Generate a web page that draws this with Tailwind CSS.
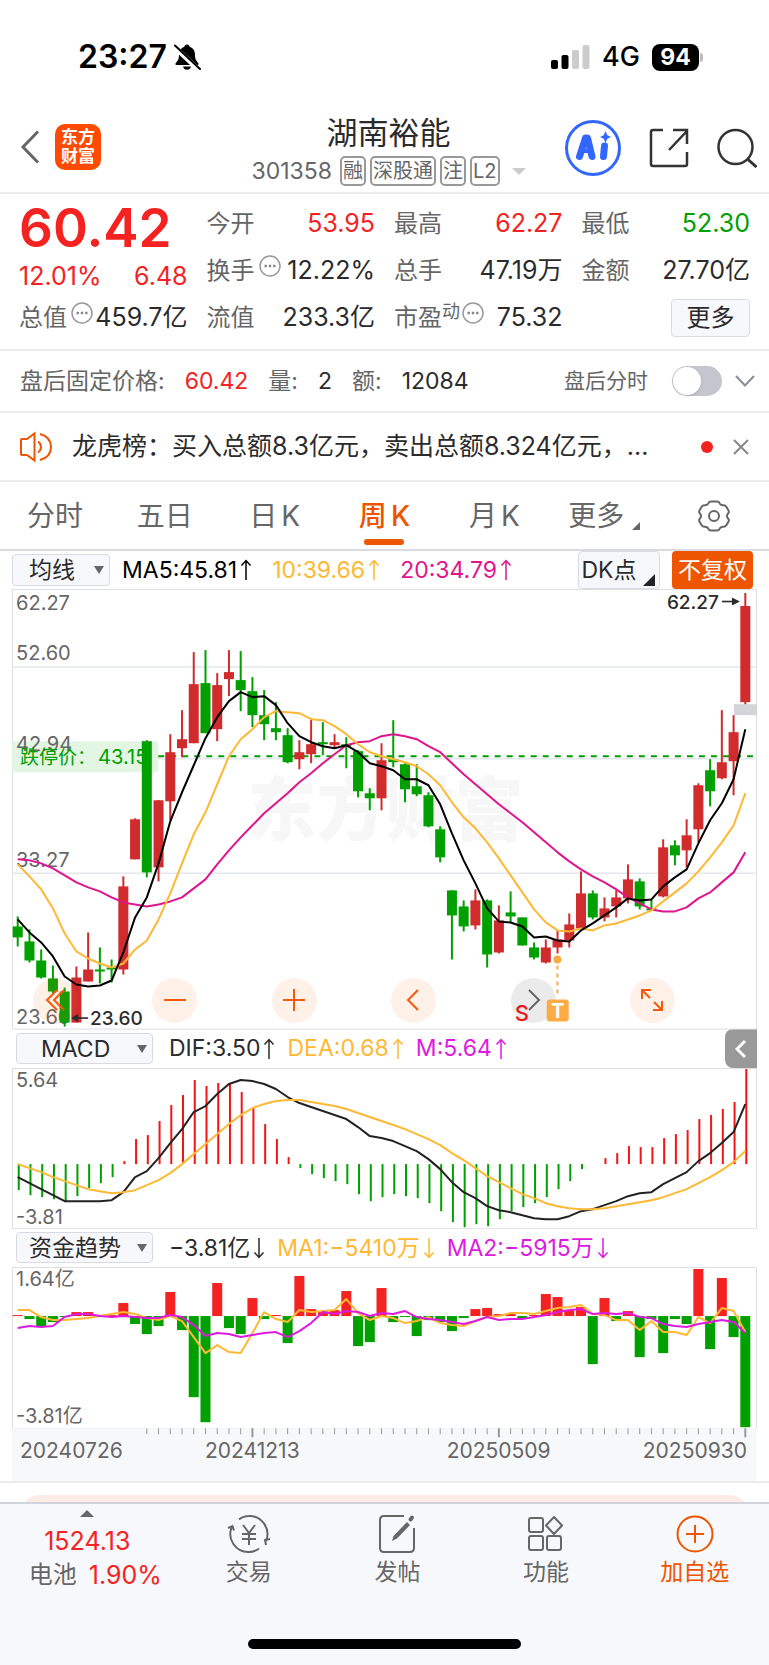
<!DOCTYPE html>
<html lang="zh-CN">

<head>
  <meta charset="UTF-8">
  <meta name="viewport" content="width=device-width, initial-scale=1.0">
  <title>湖南裕能 301358</title>
  <script src="https://cdn.jsdelivr.net/npm/@tailwindcss/browser@4"></script>
</head>

<body class="bg-white text-[#2b2b2b] font-['Inter','Noto_Sans_CJK_SC',sans-serif]">

  <!-- Shared icons -->
  <svg class="hidden">
    <symbol id="arrow-up" viewBox="0 0 12 22">
      <path d="M6 21V1.500M1.500 6.500L6 1.500l4.500 5" fill="none" stroke="currentColor" stroke-width="1.500" />
    </symbol>
    <symbol id="arrow-down" viewBox="0 0 12 22">
      <path d="M6 1v19.500M1.500 15.500L6 20.500l4.500-5" fill="none" stroke="currentColor" stroke-width="1.500" />
    </symbol>
    <symbol id="more-dots" viewBox="0 0 22 22">
      <circle cx="11" cy="11" r="10" fill="none" stroke="#999" stroke-width="1.500" />
      <path d="M5.500 11h2.400M9.800 11h2.400M14.100 11h2.400" stroke="#888" stroke-width="2.400" />
    </symbol>
    <symbol id="caret" viewBox="0 0 10 8">
      <path d="M0 0h10L5 8z" fill="currentColor" />
    </symbol>
  </svg>

  <!-- Status bar -->
  <div class="flex h-[104px] items-center justify-between pt-[10px] pr-[66px] pl-[78px] text-black">
    <div class="flex items-center gap-[6px]">
      <span class="text-[32px] font-semibold">23:27</span>
      <svg class="h-7 w-7" viewBox="0 0 28 28">
        <path d="M14 1.500c1.500 0 2.500 1 2.700 2.300 3.600 1.200 5.300 4 5.300 8 0 4.400 1.200 6 3.200 8.200.8 1 .4 2-1 2H3.800c-1.400 0-1.800-1-1-2C4.800 17.800 6 16.200 6 11.800c0-4 1.700-6.800 5.300-8C11.500 2.500 12.500 1.500 14 1.500z" />
        <path d="M10 23.500h8c-.4 2-2 3.300-4 3.300s-3.600-1.300-4-3.300z" />
        <path d="M1 3.500L26 27" stroke="#fff" stroke-width="5" />
        <path d="M2 2.500L27 26" stroke="#000" stroke-width="2" stroke-linecap="round" />
      </svg>
    </div>
    <div class="flex items-center gap-3">
      <svg class="h-6 w-[39px]" viewBox="0 0 39 24">
        <rect x="0" y="15" width="7" height="9" rx="2" />
        <rect x="10.500" y="10" width="7" height="14" rx="2" />
        <rect x="21" y="5" width="7" height="19" rx="2" fill="#ccc" />
        <rect x="31.500" y="0" width="7" height="24" rx="2" fill="#ccc" />
      </svg>
      <span class="text-[27px] font-medium">4G</span>
      <span class="flex items-center gap-[1px]">
        <span class="flex h-[27px] w-[47px] items-center justify-center rounded-lg bg-black text-[23px] font-bold text-white">94</span>
        <span class="h-[9px] w-[3px] rounded-r-full bg-[#bbb]"></span>
      </span>
    </div>
  </div>

  <!-- Header -->
  <header class="grid h-[90px] grid-cols-[1fr_auto_1fr] items-start border-b-2 border-[#ededef] pr-3 pl-5">
    <div class="flex items-center gap-[15px] pt-5">
      <button aria-label="返回">
        <svg class="h-9 w-5" viewBox="0 0 20 36"><path d="M18 2.500L3 18l15 15.500" fill="none" stroke="#666" stroke-width="3" /></svg>
      </button>
      <a href="#" class="flex h-[46px] w-[46px] flex-col items-center justify-center rounded-[10px] bg-[#ff4a00] text-[17px] leading-[19px] font-bold text-white">
        <span>东方</span><span>财富</span>
      </a>
    </div>
    <div class="flex flex-col items-center pt-2">
      <h1 class="text-[31px] leading-[42px]">湖南裕能</h1>
      <div class="flex items-center gap-1 text-[#666]">
        <span class="mr-1 text-[23px]">301358</span>
        <span class="rounded-[5px] border-2 border-[#999] px-[1px] text-[20px] leading-[26px]">融</span>
        <span class="rounded-[5px] border-2 border-[#999] px-[1px] text-[20px] leading-[26px]">深股通</span>
        <span class="rounded-[5px] border-2 border-[#999] px-[1px] text-[20px] leading-[26px]">注</span>
        <span class="rounded-[5px] border-2 border-[#999] px-[1px] text-[20px] leading-[26px]">L2</span>
        <svg class="ml-2 h-[7px] w-[14px] text-[#ccc]" viewBox="0 0 10 8" preserveAspectRatio="none"><use href="#caret" /></svg>
      </div>
    </div>
    <div class="flex items-center justify-end gap-7 pt-4">
      <button aria-label="AI 助手">
        <svg class="h-14 w-14" viewBox="0 0 56 56">
          <circle cx="28" cy="28" r="26.500" fill="#fff" stroke="#3366ff" stroke-width="3" />
          <g fill="none" stroke="#3366ff" stroke-linecap="round" stroke-linejoin="round">
            <path d="M14.500 36.500L20.500 18h2l4.500 18.500" stroke-width="7" />
            <path d="M17 31h8" stroke-width="4" />
            <path d="M39.500 26l-1 10.500" stroke-width="7" />
          </g>
          <path d="M40.500 11l1.800 4.200 3.700 1.800-3.700 1.800-1.800 4.200-1.800-4.200-3.700-1.800 3.700-1.800z" fill="#3366ff" />
        </svg>
      </button>
      <button aria-label="分享">
        <svg class="h-10 w-10" viewBox="0 0 40 40" fill="none" stroke="#333" stroke-width="2.500">
          <path d="M14 2H4Q2 2 2 4v32q0 2 2 2h32q2 0 2-2V24M20 22L38 3M24 2h14v14" />
        </svg>
      </button>
      <button aria-label="搜索">
        <svg class="h-10 w-10" viewBox="0 0 40 40" fill="none" stroke="#333" stroke-width="2.500">
          <circle cx="18.500" cy="19" r="17" /><path d="M30.500 31l9 8" stroke-width="3" />
        </svg>
      </button>
    </div>
  </header>

  <!-- Quote -->
  <section class="grid grid-cols-4 gap-x-[19px] border-b-2 border-[#ededef] px-[19px] pt-[6px] pb-2 text-[25px]">
    <div class="flex flex-col text-[#f52222]">
      <div class="flex h-[55px] items-center text-[53px] leading-[50px] font-semibold">60.42</div>
      <div class="flex h-11 items-center justify-between"><span>12.01%</span><span>6.48</span></div>
      <div class="flex h-[38px] items-center justify-between text-[#2b2b2b]">
        <span class="flex items-start text-2xl text-[#666]">总值<svg class="ml-1 h-[22px] w-[22px]"><use href="#more-dots" /></svg></span>
        <span>459.7亿</span>
      </div>
    </div>
    <div class="flex flex-col">
      <div class="flex h-[47px] items-center justify-between"><span class="text-2xl text-[#666]">今开</span><span class="text-[#f52222]">53.95</span></div>
      <div class="flex h-[47px] items-center justify-between">
        <span class="flex items-start text-2xl text-[#666]">换手<svg class="ml-1 h-[22px] w-[22px]"><use href="#more-dots" /></svg></span>
        <span>12.22%</span>
      </div>
      <div class="flex h-[47px] items-center justify-between"><span class="text-2xl text-[#666]">流值</span><span>233.3亿</span></div>
    </div>
    <div class="flex flex-col">
      <div class="flex h-[47px] items-center justify-between"><span class="text-2xl text-[#666]">最高</span><span class="text-[#f52222]">62.27</span></div>
      <div class="flex h-[47px] items-center justify-between"><span class="text-2xl text-[#666]">总手</span><span>47.19万</span></div>
      <div class="flex h-[47px] items-center justify-between">
        <span class="flex items-start text-2xl text-[#666]">市盈<span class="text-lg leading-5">动</span><svg class="ml-[2px] h-[22px] w-[22px]"><use href="#more-dots" /></svg></span>
        <span>75.32</span>
      </div>
    </div>
    <div class="flex flex-col">
      <div class="flex h-[47px] items-center justify-between"><span class="text-2xl text-[#666]">最低</span><span class="text-[#00a000]">52.30</span></div>
      <div class="flex h-[47px] items-center justify-between"><span class="text-2xl text-[#666]">金额</span><span>27.70亿</span></div>
      <div class="flex h-[47px] items-center justify-end">
        <button class="h-[38px] w-[79px] rounded border border-[#d9dbe3] bg-[#f7f8fb] text-2xl leading-8">更多</button>
      </div>
    </div>
  </section>

  <!-- After-hours price -->
  <section class="flex h-[62px] items-center border-b-2 border-[#ededef] pr-[14px] pl-5 text-[23px] text-[#666]">
    <span>盘后固定价格:</span>
    <span class="ml-5 text-[#f52222]">60.42</span>
    <span class="ml-5">量:</span>
    <span class="ml-5 text-[#2b2b2b]">2</span>
    <span class="ml-5">额:</span>
    <span class="ml-5 text-[#2b2b2b]">12084</span>
    <label for="after-hours" class="ml-auto text-[21px]">盘后分时</label>
    <span class="relative ml-6 h-[30px] w-[50px]">
      <input id="after-hours" type="checkbox" class="peer absolute inset-0 h-full w-full appearance-none rounded-full bg-[#c3c6cc] checked:bg-[#ee5500]">
      <span class="pointer-events-none absolute top-[1px] left-[1px] h-7 w-7 rounded-full bg-white shadow peer-checked:left-[21px]"></span>
    </span>
    <button aria-label="展开" class="ml-[13px]">
      <svg class="h-3 w-5" viewBox="0 0 20 12"><path d="M1 1l9 9.500L19 1" fill="none" stroke="#8a8d96" stroke-width="2" /></svg>
    </button>
  </section>

  <!-- News -->
  <section class="flex h-[69px] items-center border-b-2 border-[#ededef] pr-5 pl-5">
    <svg class="h-8 w-8 shrink-0" viewBox="0 0 32 32" fill="none" stroke="#ee5500" stroke-width="2">
      <path d="M1 9q0-1 1-1h5l7.500-5.500v27L7 24H2q-1 0-1-1zM18 10.500q3 2 3 5.500t-3 5.500M20 3q11 3 11 13T20 29" />
    </svg>
    <a href="#" class="ml-5 min-w-0 flex-1 truncate text-[25px]">龙虎榜：买入总额8.3亿元，卖出总额8.324亿元，...</a>
    <span class="ml-5 h-3 w-3 shrink-0 rounded-full bg-[#f52222]"></span>
    <button aria-label="关闭" class="ml-5 shrink-0">
      <svg class="h-4 w-4" viewBox="0 0 16 16"><path d="M1 1l14 14M15 1L1 15" stroke="#888" stroke-width="2" /></svg>
    </button>
  </section>

  <!-- Period tabs -->
  <nav class="grid h-[69px] grid-cols-7 border-b-2 border-[#d9dae2] text-[28px] text-[#666]">
    <a href="#" class="flex items-center justify-center">分时</a>
    <a href="#" class="flex items-center justify-center">五日</a>
    <a href="#" class="flex items-center justify-center gap-1">日<span>K</span></a>
    <a href="#" class="relative flex items-center justify-center gap-1 font-medium text-[#ee5500]">周<span>K</span>
      <span class="absolute bottom-1 left-1/2 h-[6px] w-10 -translate-x-1/2 rounded-full bg-[#ee5500]"></span>
    </a>
    <a href="#" class="flex items-center justify-center gap-1">月<span>K</span></a>
    <a href="#" class="flex items-center justify-center gap-2">更多
      <svg class="mt-5 h-2 w-2" viewBox="0 0 8 8"><path d="M8 0v8H0z" fill="#666" /></svg>
    </a>
    <button aria-label="设置" class="flex items-center justify-center">
      <svg class="h-8 w-8" viewBox="0 0 32 32" fill="none" stroke="#666" stroke-width="2">
        <path d="M13 1.500h6q2 0 2.500 1.500 1 2.500 4 2.300 2 0 3 1.700l2 3.500q1 1.500-.5 3-2 2.500 0 5 1.500 1.500.5 3l-2 3.500q-1 1.700-3 1.700-3-.2-4 2.300-.5 1.500-2.500 1.500h-6q-2 0-2.500-1.500-1-2.500-4-2.300-2 0-3-1.700l-2-3.500q-1-1.500.5-3 2-2.500 0-5-1.500-1.500-.5-3l2-3.500q1-1.700 3-1.700 3 .2 4-2.300.5-1.500 2.500-1.500z" />
        <circle cx="16" cy="16" r="5" />
      </svg>
    </button>
  </nav>

  <main class="px-3">
    <!-- Moving averages -->
    <div class="flex h-[38px] items-center text-[23px]">
      <button class="flex h-8 w-[98px] shrink-0 items-center justify-between rounded border border-[#d9dbe3] bg-[#f7f8fb] pr-[5px] pl-4 leading-7">均线
        <svg class="h-2 w-[10px] text-[#666]"><use href="#caret" /></svg>
      </button>
      <span class="ml-3 flex items-center gap-[3px] text-black">MA5:45.81<svg class="h-[22px] w-3"><use href="#arrow-up" /></svg></span>
      <span class="ml-5 flex items-center gap-[3px] text-[#ffb833]">10:39.66<svg class="h-[22px] w-3"><use href="#arrow-up" /></svg></span>
      <span class="ml-5 flex items-center gap-[3px] text-[#e0148c]">20:34.79<svg class="h-[22px] w-3"><use href="#arrow-up" /></svg></span>
      <button class="relative ml-auto h-[38px] w-[82px] rounded border border-[#d9dbe3] bg-[#f7f8fb] pr-5 leading-8 whitespace-nowrap">DK点
        <svg class="absolute right-1 bottom-[2px] h-3 w-3" viewBox="0 0 8 8"><path d="M8 0v8H0z" fill="#222" /></svg>
      </button>
      <button class="mr-1 ml-3 h-[38px] w-[81px] rounded bg-[#ee5500] leading-8 text-white">不复权</button>
    </div>

    <!-- Weekly candles -->
    <div class="relative">
      <svg class="block h-auto w-full" viewBox="0 0 744 440" font-size="20">
        <rect x="0.500" y="0.500" width="743" height="439" fill="none" stroke="#dddfe3" />
        <path d="M0 78H744M0 169.500H744M0 284H744" stroke="#e4e8ee" stroke-width="1.500" />
        <text x="235" y="246" font-size="69" font-weight="900" fill="#f7f7f7">东方财富</text>
        <path d="M0 152H142q4 0 4 4V179q0 4-4 4H0z" fill="#e3f5e3" />
        <g fill="#666">
          <text x="4" y="21">62.27</text>
          <text x="4" y="71">52.60</text>
          <text x="4" y="162">42.94</text>
          <text x="4" y="278">33.27</text>
          <text x="4" y="434">23.60</text>
        </g>
        <text x="8" y="175" font-size="19" fill="#00a000">跌停价：<tspan x="86" font-size="20">43.15</tspan></text>
        <path d="M146 167H744" stroke="#00a000" stroke-width="2" stroke-dasharray="6 6" />
        <rect x="721" y="115" width="23" height="11" fill="#d3d5da" />
        <g id="candles"></g>
        <g id="candle-lines" fill="none" stroke-width="2" stroke-linejoin="round"></g>
        <text x="706" y="20" text-anchor="end" font-size="19" font-weight="500" fill="#2b2b2b">62.27</text>
        <path d="M709 12.500H722" stroke="#2b2b2b" stroke-width="1.600" />
        <path d="M719 8.500L727 12.500l-8 4z" fill="#2b2b2b" />
        <text x="78" y="435" font-size="19" font-weight="500" fill="#2b2b2b">23.60</text>
        <path d="M76 428.500H64" stroke="#2b2b2b" stroke-width="1.600" />
        <path d="M66 424.500L59 428.500l7 4z" fill="#2b2b2b" />
      </svg>
      <div class="absolute right-[82px] bottom-[7px] left-[21px] flex justify-between">
        <button aria-label="最早" class="flex h-[45px] w-[45px] items-center justify-center rounded-full bg-[#ff6a1f]/10">
          <svg class="h-6 w-6" viewBox="0 0 24 24" fill="none" stroke="#f55a0a" stroke-width="2"><path d="M13 2L3 12l10 10M20 2L10 12l10 10" /></svg>
        </button>
        <button aria-label="缩小" class="flex h-[45px] w-[45px] items-center justify-center rounded-full bg-[#ff6a1f]/10">
          <svg class="h-6 w-6" viewBox="0 0 24 24" stroke="#f55a0a" stroke-width="2"><path d="M1 12h22" /></svg>
        </button>
        <button aria-label="放大" class="flex h-[45px] w-[45px] items-center justify-center rounded-full bg-[#ff6a1f]/10">
          <svg class="h-6 w-6" viewBox="0 0 24 24" stroke="#f55a0a" stroke-width="2"><path d="M1 12h22M12 1v22" /></svg>
        </button>
        <button aria-label="向左" class="flex h-[45px] w-[45px] items-center justify-center rounded-full bg-[#ff6a1f]/10">
          <svg class="h-6 w-6" viewBox="0 0 24 24" fill="none" stroke="#f55a0a" stroke-width="2"><path d="M16 2L6 12l10 10" /></svg>
        </button>
        <button aria-label="向右" class="flex h-[45px] w-[45px] items-center justify-center rounded-full bg-black/8">
          <svg class="h-6 w-6" viewBox="0 0 24 24" fill="none" stroke="#666" stroke-width="2"><path d="M8 2l10 10L8 22" /></svg>
        </button>
        <button aria-label="全屏" class="flex h-[45px] w-[45px] items-center justify-center rounded-full bg-[#ff6a1f]/10">
          <svg class="h-6 w-6" viewBox="0 0 24 24" fill="none" stroke="#f55a0a" stroke-width="2"><path d="M11 2H2v9M2 2l8 8M22 13v9h-9M22 22l-8-8" /></svg>
        </button>
      </div>
      <!-- Trade markers -->
      <svg class="pointer-events-none absolute inset-0 h-full w-full" viewBox="0 0 744 440">
        <circle cx="544.700" cy="370" r="4" fill="#ffab45" />
        <path d="M544.700 376V407" stroke="#ffab45" stroke-width="2" stroke-dasharray="4 4" />
        <rect x="534" y="410" width="22" height="22" rx="3" fill="#ffab45" />
        <text x="545" y="428" text-anchor="middle" font-size="20" font-weight="700" fill="#fff">T</text>
        <text x="502" y="431" font-size="22" font-weight="500" fill="#e81c1c">S</text>
      </svg>
    </div>

    <!-- MACD -->
    <div class="flex h-[38px] items-center pl-1 text-[23px]">
      <button class="flex h-[31px] w-[137px] shrink-0 items-center justify-between rounded border border-[#d9dbe3] bg-[#f7f8fb] pr-[5px] pl-6 leading-7">MACD
        <svg class="h-2 w-[10px] text-[#666]"><use href="#caret" /></svg>
      </button>
      <span class="ml-4 flex items-center gap-[3px]">DIF:3.50<svg class="h-[22px] w-3"><use href="#arrow-up" /></svg></span>
      <span class="ml-3 flex items-center gap-[3px] text-[#ffb833]">DEA:0.68<svg class="h-[22px] w-3"><use href="#arrow-up" /></svg></span>
      <span class="ml-3 flex items-center gap-[3px] text-[#dd1be0]">M:5.64<svg class="h-[22px] w-3"><use href="#arrow-up" /></svg></span>
      <button aria-label="收起" class="ml-auto flex h-[39px] w-8 items-center justify-center rounded-l-lg bg-[#999]">
        <svg class="h-5 w-3" viewBox="0 0 12 20"><path d="M10 2L2 10l8 8" fill="none" stroke="#fff" stroke-width="3" /></svg>
      </button>
    </div>
    <svg class="block h-auto w-full" viewBox="0 0 744 161" font-size="20" fill="#666">
      <rect x="0.500" y="0.500" width="743" height="160" fill="none" stroke="#dddfe3" />
      <text x="4" y="19">5.64</text>
      <text x="4" y="156">-3.81</text>
      <g id="macd-bars" stroke-width="2"></g>
      <g id="macd-lines" fill="none" stroke-width="2" stroke-linejoin="round"></g>
    </svg>

    <!-- Capital flow -->
    <div class="flex h-[38px] items-center pl-1 text-[23px]">
      <button class="flex h-[31px] w-[137px] shrink-0 items-center justify-between rounded border border-[#d9dbe3] bg-[#f7f8fb] pr-[5px] pl-3 leading-7">资金趋势
        <svg class="h-2 w-[10px] text-[#666]"><use href="#caret" /></svg>
      </button>
      <span class="ml-4 flex items-center gap-[3px]">−3.81亿<svg class="h-[22px] w-3"><use href="#arrow-down" /></svg></span>
      <span class="ml-3 flex items-center gap-[3px] text-[#ffb833]">MA1:−5410万<svg class="h-[22px] w-3"><use href="#arrow-down" /></svg></span>
      <span class="ml-3 flex items-center gap-[3px] text-[#dd1be0]">MA2:−5915万<svg class="h-[22px] w-3"><use href="#arrow-down" /></svg></span>
    </div>
    <svg class="block h-auto w-full" viewBox="0 0 744 214" font-size="20" fill="#666">
      <rect x="0.500" y="0.500" width="743" height="161" fill="none" stroke="#dddfe3" />
      <rect x="0" y="161" width="744" height="53" fill="#f7f8fa" />
      <text x="4" y="19">1.64亿</text>
      <text x="4" y="156">-3.81亿</text>
      <g id="flow-bars"></g>
      <g id="flow-lines" fill="none" stroke-width="2" stroke-linejoin="round"></g>
      <g id="ticks" stroke="#999"></g>
      <g font-size="21">
        <text x="8" y="191">20240726</text>
        <text x="240" y="191" text-anchor="middle">20241213</text>
        <text x="486" y="191" text-anchor="middle">20250509</text>
        <text x="734" y="191" text-anchor="end">20250930</text>
      </g>
    </svg>
  </main>

  <div class="h-[21px] overflow-hidden border-t-2 border-[#ebebef] px-5 pt-3">
    <div class="h-10 rounded-t-[20px] bg-[#feece4]"></div>
  </div>

  <!-- Bottom bar -->
  <footer class="border-t-2 border-[#d0d2dc] bg-[#f7f8fb] text-[23px] text-[#666]">
    <nav class="grid h-[135px] grid-cols-[175fr_149fr_149fr_149fr_149fr]">
      <a href="#" class="flex flex-col items-center pt-[6px] pl-4 text-2xl">
        <svg class="mr-4 h-[7px] w-[14px] rotate-180" viewBox="0 0 10 8" preserveAspectRatio="none"><use href="#caret" /></svg>
        <span class="mt-2 mr-4 text-[25px] leading-[32px] text-[#f52222]">1524.13</span>
        <span class="flex gap-3 leading-[36px]">电池 <span class="text-[25px] text-[#f52222]">1.90%</span></span>
      </a>
      <a href="#" class="flex flex-col items-center pt-[10px]">
        <svg class="h-10 w-11" viewBox="0 0 44 40" fill="none" stroke="#666" stroke-width="2">
          <path d="M12 5.500Q16.500 2 22 2a18 18 0 0 1 17 25M39 31l-1-5 5-1M32 34.500Q27.500 38 22 38A18 18 0 0 1 5 12.500M1 14l4.500-2 1.500 4.500" />
          <path d="M16 11l6 8 6-8M15 20h14M15 25h14M22 19v12" />
        </svg>
        <span class="leading-9">交易</span>
      </a>
      <a href="#" class="flex flex-col items-center pt-[10px]">
        <svg class="h-10 w-10" viewBox="0 0 40 40" fill="none" stroke="#666" stroke-width="2">
          <path d="M27 2H7Q3 2 3 6v28q0 4 4 4h26q4 0 4-4V14" />
          <path d="M15 27l1.500-5L30 8l3 3-13 13.500z" fill="#666" stroke="none" />
          <path d="M33.500 5.500l1.500-2" stroke-width="4" stroke-linecap="round" />
        </svg>
        <span class="leading-9">发帖</span>
      </a>
      <a href="#" class="flex flex-col items-center pt-[10px]">
        <svg class="h-10 w-10" viewBox="0 0 40 40" fill="none" stroke="#666" stroke-width="2" stroke-linejoin="round">
          <rect x="3" y="4" width="14" height="14" rx="2" />
          <rect x="3" y="22" width="14" height="14" rx="2" />
          <rect x="21" y="22" width="14" height="14" rx="2" />
          <path d="M28 3l8 8.500-8 8.500-8-8.500z" />
        </svg>
        <span class="leading-9">功能</span>
      </a>
      <a href="#" class="flex flex-col items-center pt-[10px] text-[#ee5500]">
        <svg class="h-10 w-10" viewBox="0 0 40 40" fill="none" stroke="#ee5500" stroke-width="2">
          <circle cx="20" cy="20" r="17.500" /><path d="M20 11v18M11 20h18" />
        </svg>
        <span class="leading-9">加自选</span>
      </a>
    </nav>
    <div class="h-[26px]">
      <div class="mx-auto h-[10px] w-[273px] rounded-full bg-black"></div>
    </div>
  </footer>

  <script>
    const STEP = 11.72;
    const px = (i) => 5.7 + STEP * i;

    // high, body top, body bottom, low, rising
    const candles = [
      [327, 337, 348, 357, 0], [340, 352, 371, 373, 0], [360, 371, 388, 389, 0], [376, 389, 402, 404, 0], [398, 402, 433, 437, 0],
      [377, 388, 433, 433, 1], [343, 380, 392, 392, 1], [358, 380, 382, 394, 0], [370, 378, 380, 393, 0], [287, 297, 380, 385, 1],
      [229, 230, 270, 270, 1], [151, 152, 283, 288, 0], [211, 211, 278, 292, 1], [145, 163, 212, 231, 1], [121, 150, 159, 168, 1],
      [63, 95, 154, 154, 1], [61, 94, 144, 144, 0], [84, 96, 140, 152, 1], [61, 83, 90, 107, 1], [62, 91, 101, 122, 0],
      [88, 102, 126, 138, 0], [101, 126, 135, 151, 0], [113, 139, 143, 151, 0], [139, 146, 173, 174, 0], [151, 163, 170, 180, 1],
      [129, 155, 165, 174, 1], [133, 153, 155, 166, 0], [145, 153, 156, 159, 1], [148, 155, 157, 179, 0], [161, 162, 202, 208, 0],
      [199, 204, 209, 221, 0], [154, 171, 209, 221, 1], [131, 170, 173, 178, 0], [174, 175, 200, 213, 0], [175, 197, 205, 207, 0],
      [203, 206, 237, 238, 0], [237, 240, 268, 273, 0], [301, 301, 326, 370, 0], [311, 317, 337, 342, 0], [300, 311, 336, 340, 1],
      [310, 311, 365, 378, 0], [316, 331, 363, 364, 1], [302, 323, 327, 333, 0], [328, 328, 356, 356, 0], [353, 358, 368, 370, 0],
      [350, 358, 373, 374, 1], [341, 350, 358, 364, 1], [324, 335, 351, 358, 1], [282, 304, 339, 339, 1], [301, 304, 328, 330, 0],
      [308, 319, 328, 332, 1], [301, 308, 317, 328, 1], [275, 290, 309, 314, 1], [289, 292, 317, 320, 0], [310, 319, 321, 321, 0],
      [250, 258, 307, 308, 1], [251, 256, 266, 276, 0], [230, 246, 261, 278, 1], [194, 196, 240, 253, 1], [170, 181, 202, 217, 0],
      [121, 173, 189, 190, 1], [126, 143, 172, 206, 1], [4, 17, 113, 115, 1]
    ];
    const ma5 = [330, 343, 353, 367, 387, 395, 397, 396, 391, 363, 328, 308, 274, 232, 203, 176, 149, 128, 112, 103, 108, 107, 116, 134, 147, 153, 157, 159, 156, 163, 174, 177, 181, 190, 190, 196, 215, 244, 271, 294, 319, 332, 333, 337, 348, 347, 351, 352, 341, 334, 326, 318, 309, 311, 310, 297, 288, 280, 254, 231, 214, 190, 140];
    const ma10 = [275, 287, 300, 319, 344, 362, 369, 374, 378, 374, 360, 351, 330, 304, 274, 245, 223, 195, 167, 150, 140, 128, 122, 123, 124, 130, 131, 137, 145, 155, 163, 167, 170, 173, 177, 185, 196, 213, 228, 239, 253, 269, 286, 303, 320, 333, 341, 342, 339, 341, 336, 334, 330, 326, 321, 312, 303, 294, 282, 268, 253, 236, 204];
    const ma20 = [270, 271, 274, 279, 286, 293, 298, 302, 308, 313, 315, 317, 315, 312, 308, 299, 290, 275, 261, 248, 236, 224, 214, 204, 193, 184, 174, 165, 156, 153, 152, 147, 145, 147, 150, 157, 163, 174, 185, 195, 205, 215, 224, 233, 243, 253, 263, 272, 280, 287, 293, 300, 308, 314, 320, 322, 322, 318, 309, 303, 293, 283, 263];

    const macd = [122, 127, 129, 131, 134, 128, 120, 115, 109, 93, 71, 67, 53, 37, 27, 12, 18, 15, 16, 24, 40, 56, 71, 89, 100, 106, 110, 113, 116, 126, 133, 129, 126, 128, 130, 135, 143, 154, 159, 156, 158, 151, 143, 139, 135, 129, 121, 113, 101, 96, 90, 85, 78, 79, 79, 70, 66, 62, 51, 47, 41, 34, 1];
    const dif = [109, 115, 121, 127, 133, 133, 133, 133, 132, 124, 109, 103, 90, 75, 61, 44, 38, 26, 16, 12, 13, 16, 21, 29, 35, 39, 43, 47, 51, 59, 68, 70, 73, 78, 83, 91, 101, 114, 124, 130, 138, 142, 144, 147, 150, 151, 151, 148, 143, 141, 137, 133, 128, 125, 124, 116, 110, 104, 93, 85, 75, 64, 36];
    const dea = [96, 100, 104, 109, 113, 117, 121, 123, 125, 124, 122, 117, 112, 105, 96, 86, 76, 66, 56, 47, 40, 36, 33, 32, 32, 34, 36, 38, 41, 45, 49, 53, 57, 61, 66, 71, 77, 85, 92, 100, 108, 114, 120, 126, 130, 135, 138, 140, 141, 141, 140, 138, 136, 134, 132, 129, 125, 121, 115, 109, 102, 94, 83];

    const flow = [48, 52, 59, 55, 50, 45, 45, 48, 48, 36, 57, 67, 59, 25, 63, 130, 155, 16, 61, 67, 31, 52, 48, 76, 9, 42, 44, 43, 24, 79, 75, 21, 55, 50, 69, 53, 55, 64, 51, 42, 41, 47, 47, 51, 48, 27, 30, 43, 40, 97, 31, 54, 44, 90, 52, 86, 52, 57, 2, 82, 11, 70, 160];
    const flowMa1 = [43, 43, 50, 53, 53, 52, 51, 49, 47, 45, 47, 51, 53, 49, 54, 70, 86, 78, 85, 86, 66, 45, 52, 55, 43, 45, 44, 43, 32, 46, 53, 49, 51, 56, 54, 50, 56, 58, 59, 54, 50, 49, 46, 46, 47, 44, 41, 40, 38, 47, 48, 53, 53, 63, 54, 65, 65, 68, 50, 56, 41, 44, 65];
    const flowMa2 = [61, 59, 60, 59, 50, 47, 47, 49, 50, 49, 50, 51, 51, 48, 50, 58, 69, 66, 67, 70, 68, 66, 65, 70, 64, 56, 45, 47, 44, 45, 49, 46, 47, 44, 50, 52, 53, 55, 57, 54, 50, 53, 52, 52, 50, 48, 45, 43, 42, 47, 46, 47, 46, 50, 51, 57, 59, 60, 57, 55, 53, 55, 66];

    const line = (ys, color) => `<polyline points="${ys.map((y, i) => `${px(i)},${y}`).join(' ')}" stroke="${color}" />`;
    const fill = (id, html) => { document.getElementById(id).innerHTML = html; };

    fill('candles', candles.map(([high, top, bottom, low, up], i) => {
      const color = up ? '#d02c2e' : '#00a000';
      return `<path d="M${px(i)} ${high}V${low}" stroke="${color}" stroke-width="2" />
        <rect x="${px(i) - 5}" y="${top}" width="10" height="${bottom - top}" fill="${color}" />`;
    }).join(''));
    fill('candle-lines', line(ma20, '#e0148c') + line(ma10, '#ffb833') + line(ma5, '#000'));

    fill('macd-bars', macd.map((y, i) => `<path d="M${px(i) + 1} 96V${y}" stroke="${y < 96 ? '#f51414' : '#00a000'}" />`).join(''));
    fill('macd-lines', line(dif, '#222') + line(dea, '#ffb833'));

    fill('flow-bars', flow.map((y, i) => `<rect x="${px(i) - 5}" y="${Math.min(y, 49)}" width="10" height="${Math.abs(y - 49)}" fill="${y < 49 ? '#f52222' : '#00a000'}" />`).join(''));
    fill('flow-lines', line(flowMa1, '#ffb833') + line(flowMa2, '#dd1be0'));

    // Weekly ticks, longer ones over the dates
    fill('ticks', flow.map((_, i) => {
      if (i < 11) return '';
      const major = [20, 41, 62].includes(i);
      return `<path d="M${px(i)} 161v${major ? 9 : 6}" stroke-width="${major ? 2 : 1}" />`;
    }).join(''));
  </script>
</body>

</html>
